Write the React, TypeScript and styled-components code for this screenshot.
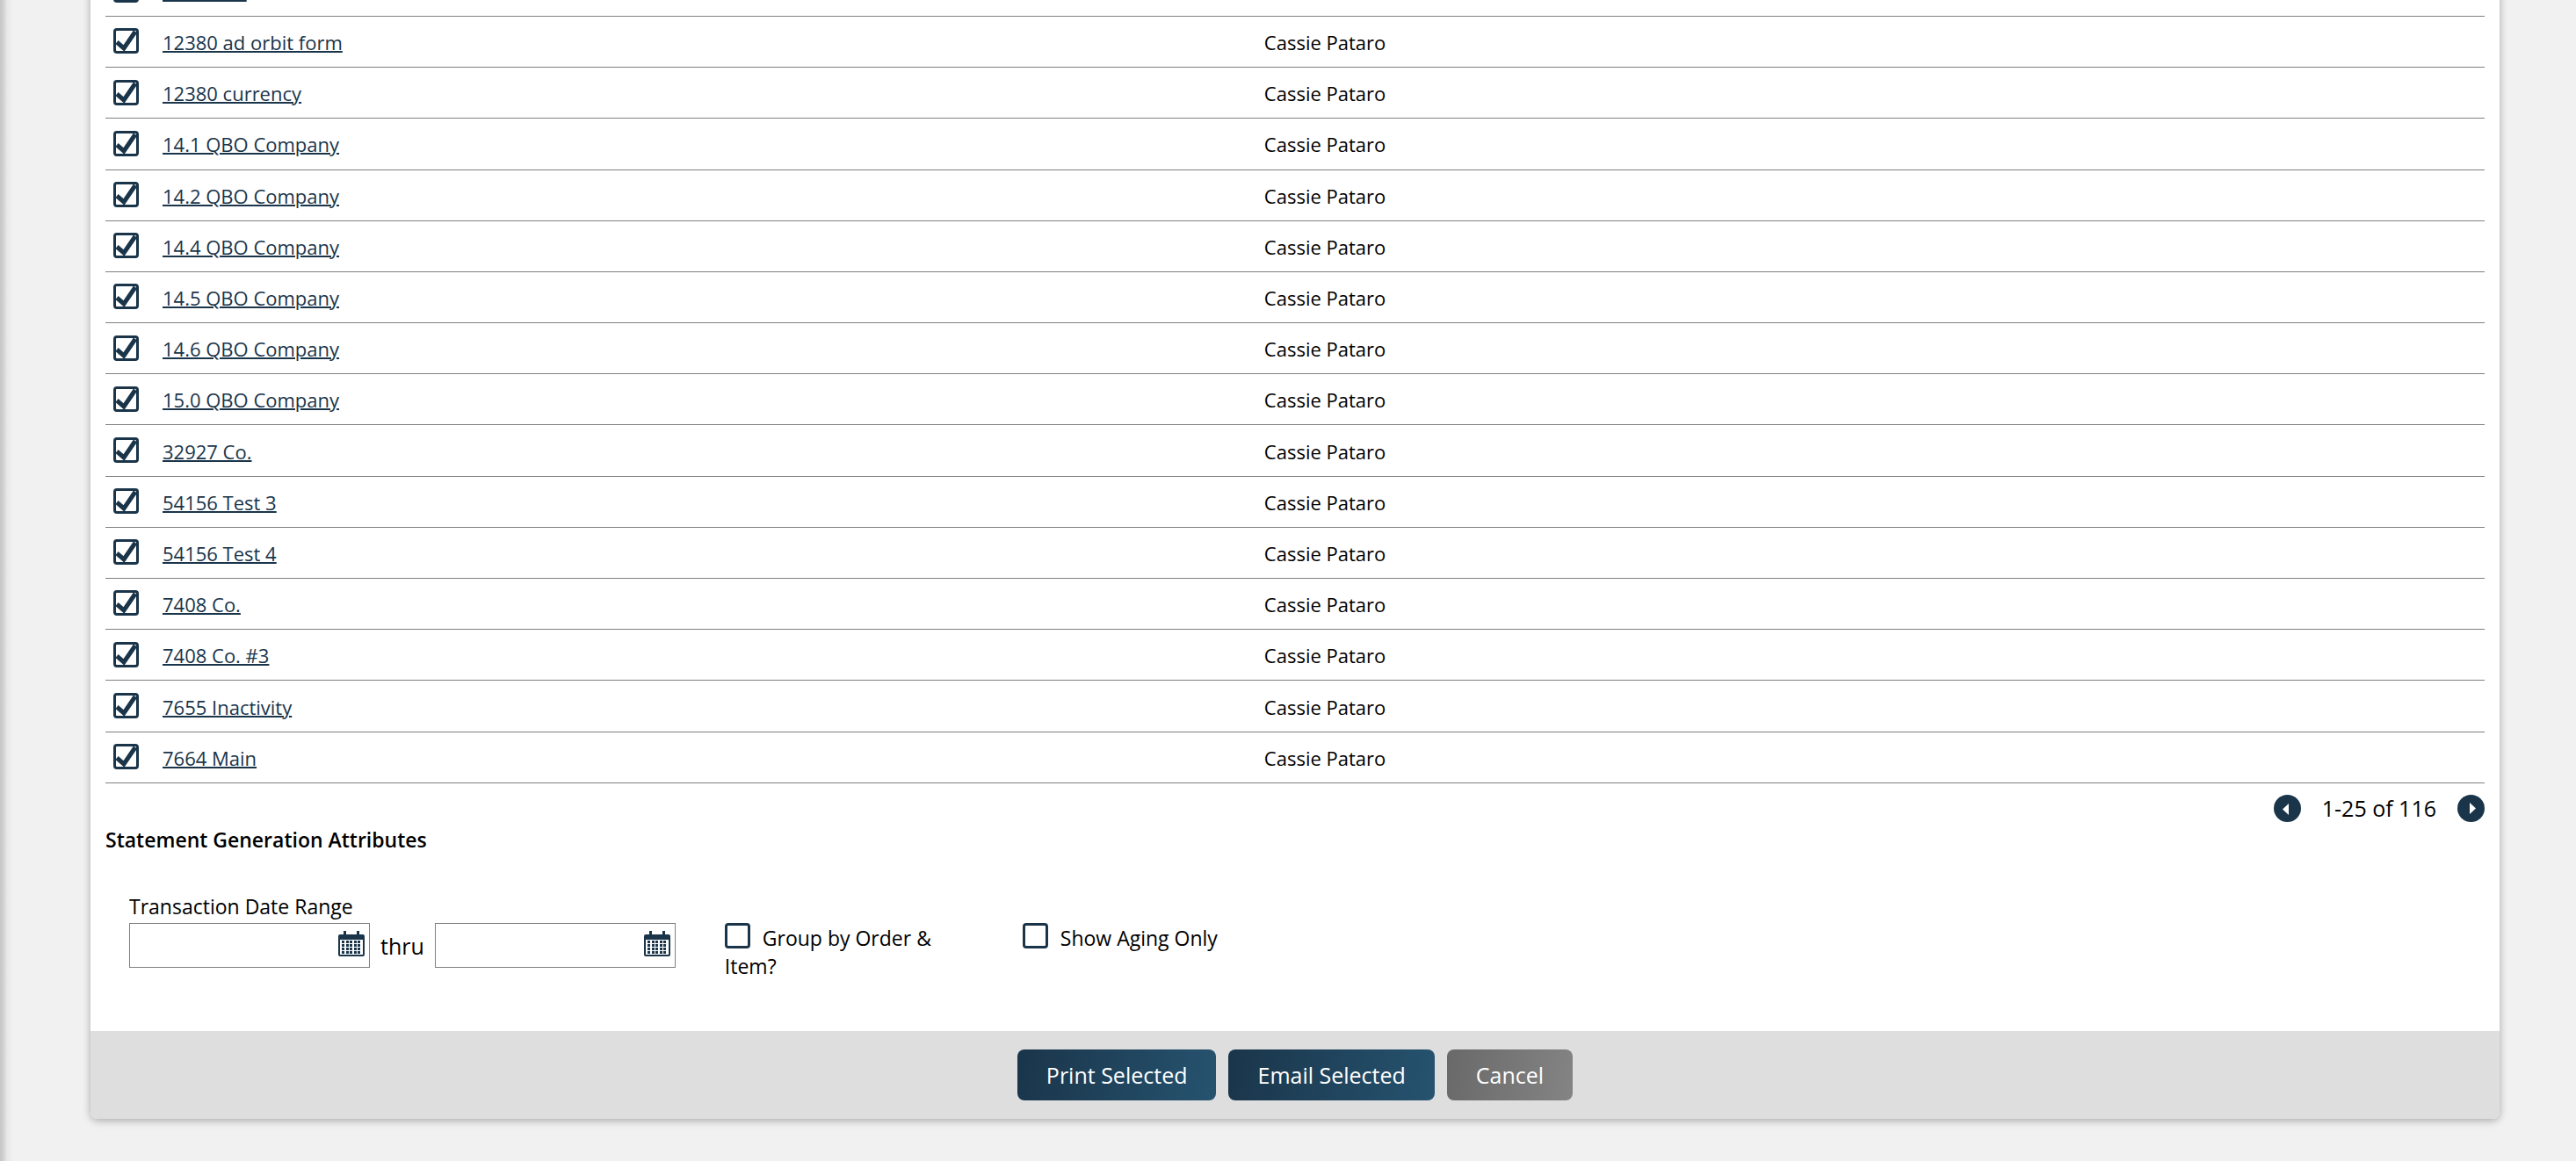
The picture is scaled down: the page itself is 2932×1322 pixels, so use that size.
import React from "react";
import styled, { createGlobalStyle } from "styled-components";

const navy = "#1a354a";
const line = "#808080";

const GlobalStyle = createGlobalStyle`
  *, *::before, *::after { box-sizing: border-box; }
  body {
    margin: 0;
    background: #f1f1f1;
    color: #000;
    font-family: "Open Sans", "Noto Sans", sans-serif;
    font-size: 23px;
    line-height: 32px;
  }
  button, input { font: inherit; }
`;

const Page = styled.main`
  height: 100vh;
  overflow: hidden;
  display: flex;
  flex-direction: column;
  justify-content: flex-end;
  padding: 0 87px 48px 103px;
  background: linear-gradient(90deg, #c6c6c6, #d2d2d2 4px, #e8e8e8 8px, #f1f1f1 15px);
`;

const Panel = styled.form`
  flex: none;
  background: #fff;
  border-radius: 8px;
  box-shadow: 0 2px 10px rgba(0, 0, 0, 0.3);
  overflow: hidden;
  margin: 0;
`;

const Body = styled.div`
  padding: 0 17px 72px;
`;

const Table = styled.table`
  width: 100%;
  height: 931px;
  table-layout: fixed;
  border-collapse: collapse;
  font-size: 22px;
  line-height: 30px;
`;

const Cell = styled.td<{ $width?: string; $indent?: number }>`
  width: ${(p) => p.$width ?? "auto"};
  padding: 1px 0 0 ${(p) => p.$indent ?? 0}px;
  border-bottom: 1px solid ${line};
  vertical-align: middle;
`;

const TickCell = styled(Cell)`
  padding-bottom: 6px;
`;

const CompanyLink = styled.a`
  color: ${navy};
  text-decoration: underline;
  text-decoration-thickness: 2px;
`;

const TickBox = styled.span`
  display: inline-grid;
  vertical-align: middle;
  width: 29px;
  height: 29px;

  & > * { grid-area: 1 / 1; }
  & > svg { pointer-events: none; visibility: hidden; }
  & > input:checked + svg { visibility: visible; }
`;

const TickInput = styled.input`
  appearance: none;
  width: 29px;
  height: 29px;
  margin: 0;
  border: 3px solid ${navy};
  border-radius: 4px;
  background: #fff;
`;

const Pager = styled.nav`
  display: flex;
  justify-content: flex-end;
  align-items: center;
  gap: 24px;
  padding-top: 12px;
  font-size: 25px;
`;

const RoundButton = styled.button`
  display: grid;
  place-items: center;
  width: 31px;
  height: 31px;
  padding: 0;
  border: 0;
  border-radius: 50%;
  background: ${navy};
`;

const Heading = styled.h2`
  margin: 4px 0 44px;
  font-size: 23px;
  line-height: 32px;
  font-weight: 600;
`;

const Attributes = styled.div`
  display: flex;
  align-items: flex-end;
  padding-left: 27px;
`;

const DateRange = styled.fieldset`
  margin: 0 56px 0 0;
  padding: 0;
  border: 0;
`;

const Legend = styled.legend`
  padding: 0;
`;

const Dates = styled.div`
  display: flex;
  align-items: center;
  gap: 12px;
  padding-top: 3px;
  font-size: 25px;
`;

const DateBox = styled.div`
  display: flex;
  align-items: flex-start;
  width: 274px;
  height: 51px;
  padding: 7px 5px;
  border: 1px solid ${line};
  background: #fff;
`;

const DateInput = styled.input`
  flex: 1;
  min-width: 0;
  height: 33px;
  padding: 0 6px;
  border: 0;
  outline: 0;
  background: transparent;
`;

const CalendarButton = styled.button`
  display: block;
  width: 30px;
  height: 31px;
  padding: 0;
  border: 0;
  background: transparent;
`;

const Options = styled.div`
  display: flex;
  gap: 49px;
  height: 51px;
`;

const Option = styled.label`
  width: 290px;

  & > ${TickBox} { margin-right: 14px; vertical-align: -3px; }
`;

const Footer = styled.footer`
  display: flex;
  justify-content: center;
  gap: 14px;
  padding: 21px;
  background: #dedede;
`;

const ActionButton = styled.button<{ $muted?: boolean }>`
  height: 58px;
  padding: 0 33px;
  border: 0;
  border-radius: 8px;
  color: #fff;
  font-size: 25px;
  background: ${(p) =>
    p.$muted
      ? "linear-gradient(100deg, #696969, #848484)"
      : "linear-gradient(100deg, #1a354a, #26536f)"};
`;

const companies = [
  "12380 Co",
  "12380 ad orbit form",
  "12380 currency",
  "14.1 QBO Company",
  "14.2 QBO Company",
  "14.4 QBO Company",
  "14.5 QBO Company",
  "14.6 QBO Company",
  "15.0 QBO Company",
  "32927 Co.",
  "54156 Test 3",
  "54156 Test 4",
  "7408 Co.",
  "7408 Co. #3",
  "7655 Inactivity",
  "7664 Main",
];

function Tick(props: React.InputHTMLAttributes<HTMLInputElement>) {
  return (
    <TickBox>
      <TickInput type="checkbox" {...props} />
      <svg width="29" height="29" viewBox="0 0 29 29" aria-hidden="true">
        <path
          d="M4 16L12 23L25 4"
          fill="none"
          stroke={navy}
          strokeWidth="5"
        />
      </svg>
    </TickBox>
  );
}

function CalendarIcon() {
  return (
    <svg width="30" height="31" viewBox="0 0 30 31" aria-hidden="true">
      <path
        fill={navy}
        d="M6 1h3v4h12V1h3v4h4a2 2 0 0 1 2 2v21a2 2 0 0 1-2 2H2a2 2 0 0 1-2-2V7a2 2 0 0 1 2-2h4z"
      />
      <path fill="#fff" d="M2 11h26v17H2z" />
      {[12, 16, 20, 24].map((y) =>
        [4, 9, 13, 18, 22].map((x) => (
          <rect key={`${x}-${y}`} x={x} y={y} width="3" height="3" fill={navy} />
        )),
      )}
    </svg>
  );
}

function DateField({ name }: { name: string }) {
  return (
    <DateBox>
      <DateInput type="text" aria-label={name} />
      <CalendarButton type="button" aria-label={`Choose ${name}`}>
        <CalendarIcon />
      </CalendarButton>
    </DateBox>
  );
}

export default function App() {
  return (
    <>
      <GlobalStyle />
      <Page>
        <Panel onSubmit={(e) => e.preventDefault()}>
          <Body>
            <Table>
              <tbody>
                {companies.map((name) => (
                  <tr key={name}>
                    <TickCell $width="65px" $indent={9}>
                      <Tick defaultChecked aria-label={name} />
                    </TickCell>
                    <Cell>
                      <CompanyLink href="#">{name}</CompanyLink>
                    </Cell>
                    <Cell $width="52%" $indent={19}>
                      Cassie Pataro
                    </Cell>
                  </tr>
                ))}
              </tbody>
            </Table>
            <Pager aria-label="Pages">
              <RoundButton type="button" aria-label="Previous page">
                <svg width="31" height="31" viewBox="0 0 31 31">
                  <path d="M17 10v13l-7-6.500z" fill="#fff" />
                </svg>
              </RoundButton>
              <span>1-25 of 116</span>
              <RoundButton type="button" aria-label="Next page">
                <svg width="31" height="31" viewBox="0 0 31 31">
                  <path d="M14 9v13l7-6.500z" fill="#fff" />
                </svg>
              </RoundButton>
            </Pager>
            <Heading>Statement Generation Attributes</Heading>
            <Attributes>
              <DateRange>
                <Legend>Transaction Date Range</Legend>
                <Dates>
                  <DateField name="start date" />
                  <span>thru</span>
                  <DateField name="end date" />
                </Dates>
              </DateRange>
              <Options>
                <Option>
                  <Tick />
                  Group by Order &amp; Item?
                </Option>
                <Option>
                  <Tick />
                  Show Aging Only
                </Option>
              </Options>
            </Attributes>
          </Body>
          <Footer>
            <ActionButton type="submit">Print Selected</ActionButton>
            <ActionButton type="button">Email Selected</ActionButton>
            <ActionButton type="button" $muted>
              Cancel
            </ActionButton>
          </Footer>
        </Panel>
      </Page>
    </>
  );
}
